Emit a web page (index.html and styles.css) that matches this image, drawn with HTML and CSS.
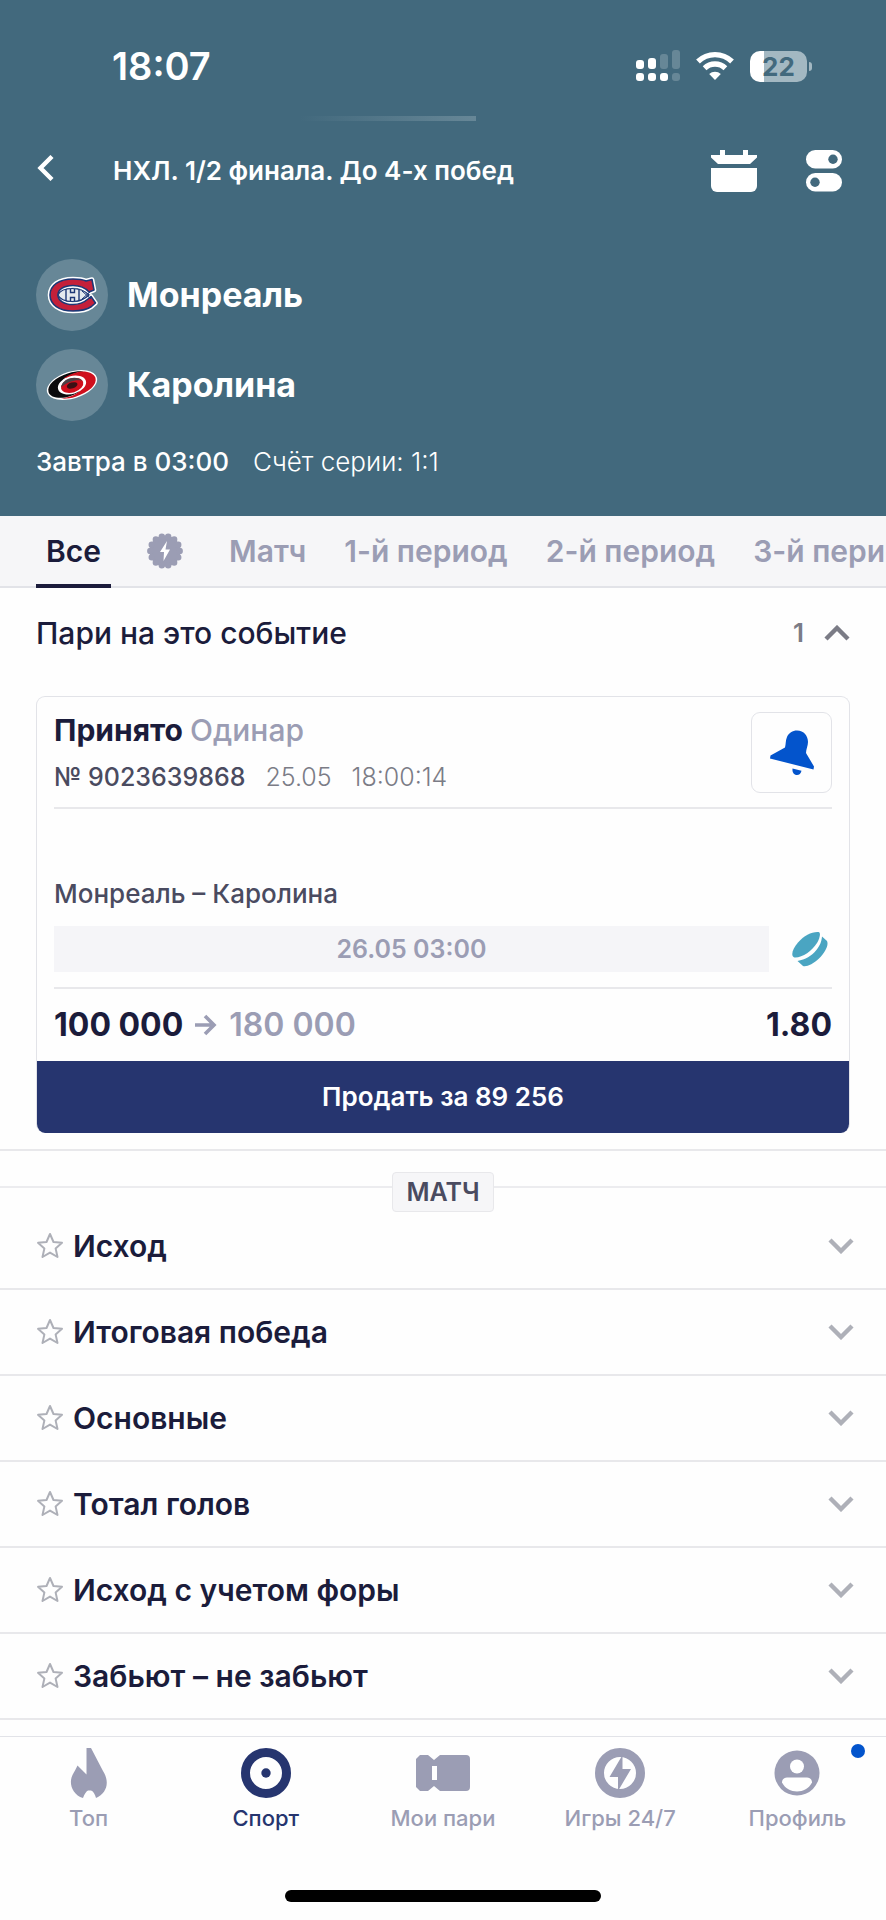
FILE: index.html
```html
<!DOCTYPE html>
<html lang="ru">
<head>
  <meta charset="UTF-8">
  <meta name="viewport" content="width=device-width, initial-scale=1.0">
  <title>Монреаль – Каролина</title>
  <link rel="stylesheet" href="styles.css">
</head>
<body>
  <!-- shared icons -->
  <svg class="sprite" width="0" height="0" aria-hidden="true">
    <symbol id="star" viewBox="0 0 28 28">
      <path d="M14 2l3.500 8 8.500.800-6.400 5.600 1.900 8.600-7.500-4.400L6.500 25l1.900-8.600L2 10.800l8.500-.800z" fill="none" stroke="#aeb0b8" stroke-width="2" stroke-linejoin="round"/>
    </symbol>
    <symbol id="chevron" viewBox="0 0 26 16">
      <path d="M2 2l11 11L24 2" fill="none" stroke="currentColor" stroke-width="4.400"/>
    </symbol>
  </svg>

  <header class="header">
    <div class="status">
      <span class="time">18:07</span>
      <div class="status-icons">
        <svg width="44" height="32" viewBox="0 0 44 32" fill="#fff">
          <rect x="0" y="10" width="8" height="9" rx="3"/>
          <rect x="12" y="8" width="8" height="11" rx="3"/>
          <rect x="24" y="4" width="8" height="15" rx="3" opacity=".2"/>
          <rect x="36" y="0" width="8" height="19" rx="3" opacity=".2"/>
          <rect x="0" y="23" width="8" height="8" rx="3"/>
          <rect x="12" y="23" width="8" height="8" rx="3"/>
          <rect x="24" y="23" width="8" height="8" rx="3"/>
          <rect x="36" y="23" width="8" height="8" rx="3" opacity=".2"/>
        </svg>
        <svg width="38" height="32" viewBox="0 0 38 32">
          <g fill="none" stroke="#fff" stroke-width="5.400">
            <path d="M2 11.500a24.500 24.500 0 0 1 34 0"/>
            <path d="M8.600 18.200a15 15 0 0 1 20.800 0"/>
          </g>
          <path d="M19 30l-5.800-6a8.300 8.300 0 0 1 11.600 0z" fill="#fff"/>
        </svg>
        <div class="battery">22</div>
      </div>
    </div>
    <div class="loader"></div>

    <div class="topbar">
      <button class="icon-btn back" aria-label="Назад">
        <svg width="18" height="26" viewBox="0 0 18 26"><path d="M16 1.500L4.500 13 16 24.500" fill="none" stroke="#fff" stroke-width="4.400"/></svg>
      </button>
      <h1>НХЛ. 1/2 финала. До 4-х побед</h1>
      <button class="icon-btn" aria-label="Календарь">
        <svg width="46" height="42" viewBox="0 0 46 42" fill="#fff">
          <path d="M0 5h9V0h5v5h18V0h5v5h9v2.500L39 14H7L0 7.500z"/>
          <path d="M0 18h46v18a6 6 0 0 1-6 6H6a6 6 0 0 1-6-6z"/>
        </svg>
      </button>
      <button class="icon-btn" aria-label="Настройки">
        <svg width="36" height="42" viewBox="0 0 36 42">
          <rect width="36" height="18.500" rx="9.250" fill="#fff"/>
          <rect y="23" width="36" height="18.500" rx="9.250" fill="#fff"/>
          <circle cx="27" cy="9.200" r="4.700" fill="#42697d"/>
          <circle cx="9" cy="32.200" r="4.700" fill="#42697d"/>
        </svg>
      </button>
    </div>

    <div class="teams">
      <div class="team">
        <span class="team-logo">
          <svg width="52" height="38" viewBox="0 0 52 38">
            <g stroke-linejoin="round">
              <path d="M40 5l6-1.500L48 14l-5 2c-4-4.500-9-6.500-16-6.500-9 0-15 4-15 9.500s6 9.500 15 9.500c7 0 11-2 15-5.500l3-2.500 4.500 6.500-4 3.500c-5 3.500-11 4.500-18.500 4.500C13 35 4 28.500 4 19S13 3 27 3c6 0 10 .500 13 2z" fill="none" stroke="#fff" stroke-width="4.600"/>
              <path d="M40 5l6-1.500L48 14l-5 2c-4-4.500-9-6.500-16-6.500-9 0-15 4-15 9.500s6 9.500 15 9.500c7 0 11-2 15-5.500l3-2.500 4.500 6.500-4 3.500c-5 3.500-11 4.500-18.500 4.500C13 35 4 28.500 4 19S13 3 27 3c6 0 10 .500 13 2z" fill="#c4203a" stroke="#1c3776" stroke-width="1.600"/>
              <path d="M12 19c2-4.500 7-6.500 14-6.500 8 0 13 2.500 17 6.500-4 4-9 6.500-17 6.500-7 0-12-2-14-6.500z" fill="#e4e9ee" stroke="#1c3776" stroke-width="1.200"/>
            </g>
            <path d="M20 13v12M24.500 13v3.500h4V13M24.500 25v-3.500h4V25M33 13.500v11" fill="none" stroke="#1c3776" stroke-width="1.400"/>
            <path d="M36 15l9 8M36 23l9-8" stroke="#1c3776" stroke-width="1"/>
          </svg>
        </span>
        <span>Монреаль</span>
      </div>
      <div class="team">
        <span class="team-logo">
          <svg width="52" height="36" viewBox="0 0 52 36">
            <g transform="rotate(-17 26 18)">
              <ellipse cx="26" cy="18" rx="26" ry="13.500" fill="#fff"/>
              <path d="M1.500 18C1.500 11 12 5.800 26 5.800c6 0 11 1 15 2.700-8-1.500-17-1-22 2.500-6 4-4 9.500 1 12.500l14 2.500c-4 1-10 3-18 2C7 26.500 1.500 22.500 1.500 18z" fill="#0b0b0d"/>
              <path d="M50.500 18c0 7-10.500 12.200-24.500 12.200-6 0-11-1-15-2.700 8 1.500 17 1 22-2.500 6-4 4-9.500-1-12.500L20 9c4-1 10-2.500 17-1.500 8 1.500 13.500 6 13.500 10.500z" fill="#cf0f1d"/>
              <ellipse cx="26" cy="18" rx="14.500" ry="9" fill="#fff"/>
              <ellipse cx="26" cy="18.500" rx="11.500" ry="7" fill="#cf0f1d"/>
              <path d="M15 17c2-4.500 6.500-6 11-6s10 2.500 11 6c-3-2-7-2.500-10-2.500-5 0-9 1-12 2.500z" fill="#4a4045"/>
              <ellipse cx="26" cy="18.500" rx="5.500" ry="3" fill="#3a1014"/>
            </g>
          </svg>
        </span>
        <span>Каролина</span>
      </div>
    </div>
    <p class="match-info"><b>Завтра в 03:00</b><span>Счёт серии: 1:1</span></p>
  </header>

  <nav class="tabs">
    <a href="#all" class="active">Все</a>
    <a href="#boost" class="boost" aria-label="Бусты">
      <svg width="36" height="36" viewBox="0 0 36 36">
        <circle cx="18" cy="18" r="15.500" fill="#9b9db4"/>
        <circle cx="18" cy="18" r="14.700" fill="none" stroke="#9b9db4" stroke-width="6.400" stroke-linecap="round" pathLength="14" stroke-dasharray="0 1"/>
        <path d="M20 8l-7 11h4l-.500 9L23 16.500h-4.500z" fill="#fff"/>
      </svg>
    </a>
    <a href="#match">Матч</a>
    <a href="#p1">1-й период</a>
    <a href="#p2">2-й период</a>
    <a href="#p3">3-й период</a>
  </nav>

  <main>
    <section class="bets">
      <button class="bets-title">
        <span>Пари на это событие</span>
        <span class="count">1</span>
        <svg class="chev up" width="26" height="16"><use href="#chevron"/></svg>
      </button>

      <article class="bet">
        <div class="bet-body">
          <div class="bet-head">
            <div>
              <h2>Принято <span>Одинар</span></h2>
              <p class="bet-meta"><b>№ 9023639868</b><span>25.05</span><span>18:00:14</span></p>
            </div>
            <button class="bell" aria-label="Уведомления">
              <svg width="46" height="46" viewBox="0 0 46 46" fill="#0354cc">
                <path d="M28 .500c7 0 11 5.500 11 11.500 0 4-2 7-2 11l8 13.500-.500 3L1 28.500l.500-3L16 17.500c1-4 .500-7 2-10.500 1.800-4 5.500-6.500 10-6.500z"/>
                <path d="M23.500 38.500l9 2.200c-.500 2.800-2.300 4.300-4.500 4.300-3 0-5-2.500-4.500-6.500z"/>
              </svg>
            </button>
          </div>
          <div class="bet-event">
            <p>Монреаль – Каролина</p>
            <div class="bet-time">
              <time>26.05 03:00</time>
              <svg width="36" height="36" viewBox="0 0 36 36" fill="#4aa5c2">
                <path d="M26.500 1c2.500.500 1.500 6-1.500 11C20 20 10 27 2.500 26.500-1.500 25 0 18.500 6 11.500 12 4.500 20 .500 26.500 1z"/>
                <path d="M30 5.500l5 4.500c2 4-2 11.500-8 17.500-6 5.500-12 8.500-16 7.500L5.500 30c8-1.500 14-5 18.500-10.500 4-5 5.500-8.500 6-14z"/>
              </svg>
            </div>
          </div>
          <div class="bet-sum">
            <b>100 000</b>
            <svg width="22" height="22" viewBox="0 0 22 22"><path d="M0 11h19M10 2l9 9-9 9" fill="none" stroke="#9b9db4" stroke-width="3.600"/></svg>
            <span>180 000</span>
            <b class="odds">1.80</b>
          </div>
        </div>
        <button class="sell">Продать за 89 256</button>
      </article>
    </section>

    <section class="markets">
      <div class="divider"><h3>МАТЧ</h3></div>
      <ul>
        <li>
          <button class="fav" aria-label="В избранное"><svg width="28" height="28"><use href="#star"/></svg></button>
          <button class="market">Исход<svg class="chev" width="26" height="16"><use href="#chevron"/></svg></button>
        </li>
        <li>
          <button class="fav" aria-label="В избранное"><svg width="28" height="28"><use href="#star"/></svg></button>
          <button class="market">Итоговая победа<svg class="chev" width="26" height="16"><use href="#chevron"/></svg></button>
        </li>
        <li>
          <button class="fav" aria-label="В избранное"><svg width="28" height="28"><use href="#star"/></svg></button>
          <button class="market">Основные<svg class="chev" width="26" height="16"><use href="#chevron"/></svg></button>
        </li>
        <li>
          <button class="fav" aria-label="В избранное"><svg width="28" height="28"><use href="#star"/></svg></button>
          <button class="market">Тотал голов<svg class="chev" width="26" height="16"><use href="#chevron"/></svg></button>
        </li>
        <li>
          <button class="fav" aria-label="В избранное"><svg width="28" height="28"><use href="#star"/></svg></button>
          <button class="market">Исход с учетом форы<svg class="chev" width="26" height="16"><use href="#chevron"/></svg></button>
        </li>
        <li>
          <button class="fav" aria-label="В избранное"><svg width="28" height="28"><use href="#star"/></svg></button>
          <button class="market">Забьют – не забьют<svg class="chev" width="26" height="16"><use href="#chevron"/></svg></button>
        </li>
      </ul>
    </section>
  </main>

  <footer class="bottom">
    <nav class="bottom-nav">
      <a href="#top">
        <svg width="50" height="52" viewBox="0 0 50 52" fill="#9b9db4">
          <path d="M22.500 1h4.500l12 23c7 11 4 22-7 27-1-4-3-7-5-7.500h-3c-2 1-3.500 3.500-5 7.500C8 47.500 4.500 36 8.500 28c1.500-3 3.500-6 5-9.500l9 9z"/>
        </svg>
        Топ
      </a>
      <a href="#sport" class="active">
        <svg width="50" height="52" viewBox="0 0 50 52">
          <circle cx="25" cy="26" r="20.500" fill="none" stroke="#26356f" stroke-width="9"/>
          <circle cx="25" cy="26" r="4.700" fill="#26356f"/>
        </svg>
        Спорт
      </a>
      <a href="#bets">
        <svg width="56" height="52" viewBox="0 0 56 52">
          <path d="M5 8h8l6 5 6-5h26a4 4 0 0 1 4 4v28a4 4 0 0 1-4 4H25l-6-5-6 5H5l-4-4V12z" fill="#9b9db4"/>
          <path d="M17 19h5v14h-5z" fill="#fff"/>
        </svg>
        Мои пари
      </a>
      <a href="#games">
        <svg width="50" height="52" viewBox="0 0 50 52">
          <circle cx="25" cy="26" r="20.500" fill="none" stroke="#9b9db4" stroke-width="9"/>
          <path d="M27.500 8l-13 22h8.500v14L36 22h-8.500z" fill="#9b9db4"/>
        </svg>
        Игры 24/7
      </a>
      <a href="#profile">
        <svg width="50" height="52" viewBox="0 0 50 52">
          <circle cx="25" cy="26" r="22.500" fill="#9b9db4"/>
          <circle cx="25" cy="19.500" r="7" fill="#fff"/>
          <path d="M15 30.500h20c3 0 5 2 5 5-3 6-9 9-15 9s-12-3-15-9c0-3 2-5 5-5z" fill="#fff"/>
        </svg>
        Профиль
        <span class="dot"></span>
      </a>
    </nav>
    <div class="home-bar"></div>
  </footer>
</body>
</html>
```
FILE: styles.css
```css
* {
  box-sizing: border-box;
}

body {
  margin: 0;
  min-height: 100vh;
  display: flex;
  flex-direction: column;
  background: #fefefe;
  color: #1b1c3b;
  font-family: Inter, "Noto Sans", sans-serif;
  font-size: 26px;
  line-height: 32px;
  overflow-x: hidden;
}

h1, h2, h3, p, ul {
  margin: 0;
  padding: 0;
}

button {
  padding: 0;
  border: none;
  background: none;
  color: inherit;
  font: inherit;
  cursor: pointer;
}

a {
  color: inherit;
  text-decoration: none;
}

svg {
  display: block;
  flex: none;
}

.sprite {
  position: absolute;
}

/* Header */
.header {
  background: #42697d;
  color: #fff;
  padding: 46px 36px 38px;
}

.status {
  display: flex;
  justify-content: space-between;
  align-items: center;
  height: 40px;
  padding: 0 43px 0 76px;
}

.time {
  font-size: 38px;
  font-weight: 600;
}

.status-icons {
  display: flex;
  align-items: center;
  gap: 16px;
}

.battery {
  position: relative;
  width: 57px;
  height: 31px;
  border-radius: 10px;
  background: linear-gradient(90deg, #fff 14px, #a3b8c2 14px);
  color: #42697d;
  font-size: 26px;
  line-height: 31px;
  font-weight: 700;
  text-align: center;
}

.battery::after {
  content: "";
  position: absolute;
  left: 59px;
  top: 11px;
  width: 3px;
  height: 9px;
  border-radius: 0 4px 4px 0;
  background: #a3b8c2;
}

.loader {
  width: 176px;
  height: 5px;
  margin: 30px 0 28px 264px;
  background: linear-gradient(90deg, #42697d, #678797);
}

.topbar {
  display: flex;
  align-items: center;
  gap: 49px;
  height: 44px;
  padding-right: 8px;
}

.topbar h1 {
  flex: 1;
  margin-left: 10px;
  font-size: 26px;
  font-weight: 600;
  white-space: nowrap;
}

.back {
  margin-bottom: 6px;
}

.teams {
  display: grid;
  gap: 18px;
  margin-top: 66px;
}

.team {
  display: flex;
  align-items: center;
  gap: 19px;
  font-size: 34px;
  font-weight: 700;
}

.team-logo {
  display: flex;
  align-items: center;
  justify-content: center;
  width: 72px;
  height: 72px;
  border-radius: 50%;
  background: #678797;
}

.match-info {
  display: flex;
  gap: 24px;
  margin-top: 25px;
}

.match-info b {
  font-weight: 500;
}

.match-info span {
  font-weight: 300;
}

/* Period tabs */
.tabs {
  display: flex;
  gap: 18px;
  height: 72px;
  padding-left: 36px;
  overflow: hidden;
  background: #f6f6f8;
  box-shadow: inset 0 -2px #e2e3e8;
  color: #9b9db4;
  font-size: 30px;
  font-weight: 600;
  white-space: nowrap;
}

.tabs a {
  display: flex;
  align-items: center;
  padding: 2px 10px 0;
  border-bottom: 4px solid transparent;
}

.tabs .boost {
  padding: 2px 18px 0;
}

.tabs .active {
  color: #1b1c3b;
  border-color: #1b1c3b;
}

/* Current bet */
.bets {
  padding: 0 36px 16px;
  border-bottom: 2px solid #e8e8eb;
}

.bets-title {
  display: flex;
  align-items: center;
  gap: 20px;
  width: 100%;
  height: 90px;
  margin-bottom: 18px;
  font-size: 30px;
  font-weight: 500;
  text-align: left;
}

.bets-title .count {
  margin-left: auto;
  color: #7b7c86;
  font-size: 26px;
  font-weight: 600;
}

.chev {
  color: #aeb0b8;
}

.chev.up {
  transform: rotate(180deg);
  color: #7b7c86;
}

.bet {
  border: 1px solid #e2e3e8;
  border-bottom: none;
  border-radius: 9px;
  overflow: hidden;
}

.bet-body {
  padding: 15px 17px 0;
}

.bet-head {
  display: flex;
  justify-content: space-between;
  height: 97px;
  border-bottom: 2px solid #e8e8eb;
}

.bet-head h2 {
  margin-top: 2px;
  font-size: 30px;
  font-weight: 700;
}

.bet-head h2 span {
  color: #9b9db4;
  font-weight: 500;
}

.bet-meta {
  display: flex;
  gap: 20px;
  margin-top: 15px;
  color: #7b7c86;
  font-size: 25px;
  font-weight: 300;
}

.bet-meta b {
  color: #4a4b60;
  font-weight: 500;
}

.bell {
  display: flex;
  align-items: center;
  justify-content: center;
  width: 81px;
  height: 81px;
  border: 1px solid #e2e3e8;
  border-radius: 9px;
}

.bet-event {
  padding: 69px 0 15px;
  border-bottom: 2px solid #e8e8eb;
  color: #4a4b60;
  font-weight: 500;
}

.bet-time {
  display: flex;
  align-items: center;
  gap: 23px;
  margin-top: 16px;
  padding-right: 4px;
}

.bet-time time {
  flex: 1;
  background: #f5f5f8;
  color: #9b9db4;
  font-size: 25px;
  font-weight: 600;
  line-height: 46px;
  text-align: center;
}

.bet-sum {
  display: flex;
  align-items: center;
  gap: 12px;
  height: 72px;
  font-size: 32px;
}

.bet-sum b {
  font-weight: 700;
}

.bet-sum span {
  color: #9b9db4;
  font-weight: 600;
}

.bet-sum .odds {
  margin-left: auto;
}

.sell {
  display: block;
  width: 100%;
  height: 72px;
  background: #26356f;
  color: #fff;
  font-weight: 600;
}

/* Markets */
.divider {
  display: flex;
  align-items: flex-start;
  height: 53px;
  padding-top: 21px;
}

.divider::before,
.divider::after {
  content: "";
  flex: 1;
  height: 2px;
  margin-top: 14px;
  background: #ececef;
}

.divider h3 {
  padding: 0 13px;
  border: 1px solid #e8e8eb;
  border-radius: 4px;
  background: #f6f6f8;
  color: #4a4b60;
  font-size: 25px;
  line-height: 38px;
  font-weight: 600;
}

.markets ul {
  list-style: none;
}

.markets li {
  display: flex;
  align-items: center;
  gap: 9px;
  height: 86px;
  padding: 0 32px 0 36px;
  border-bottom: 2px solid #e8e8eb;
}

.market {
  flex: 1;
  display: flex;
  align-items: center;
  justify-content: space-between;
  height: 84px;
  font-size: 30px;
  font-weight: 600;
  text-align: left;
}

/* Bottom navigation */
.bottom {
  margin-top: auto;
  padding-bottom: 18px;
  border-top: 1px solid #e2e3e8;
}

.bottom-nav {
  display: grid;
  grid-template-columns: repeat(5, 1fr);
  color: #9b9db4;
  font-size: 22px;
  font-weight: 500;
}

.bottom-nav a {
  position: relative;
  display: flex;
  flex-direction: column;
  align-items: center;
  gap: 3px;
  padding-top: 10px;
}

.bottom-nav .active {
  color: #26356f;
}

.dot {
  position: absolute;
  top: 7px;
  right: 21px;
  width: 14px;
  height: 14px;
  border-radius: 50%;
  background: #0354cc;
}

.home-bar {
  width: 316px;
  height: 12px;
  margin: 56px auto 0;
  border-radius: 6px;
  background: #000;
}
```
